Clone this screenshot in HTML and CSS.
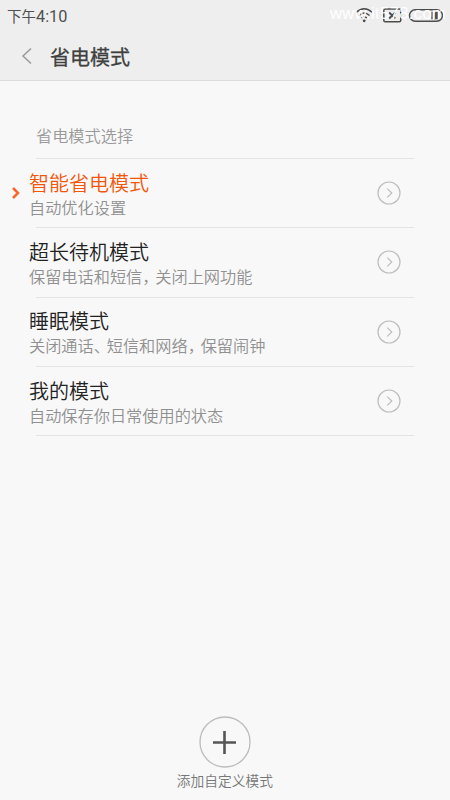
FILE: index.html
```html
<!DOCTYPE html>
<html lang="zh-CN">
<head>
<meta charset="utf-8">
<title>省电模式</title>
<link rel="stylesheet" href="styles.css">
</head>
<body>
<div class="screen">
  <header class="top">
    <div class="status">
      <span class="time">下午<span class="digits">4:10</span></span>
      <svg class="status-icons" width="92" height="20" viewBox="0 0 92 20" fill="none" stroke="#4c4c4c">
        <path d="M2 6.5Q10.2 -1 18.5 6.5M5 9.5Q10.2 4.5 15.5 9.5M7.5 12Q10.2 10 13 12" stroke-width="1.5"/>
        <circle cx="10.2" cy="14.8" r="1.4" fill="#4c4c4c" stroke="none"/>
        <rect x="29.8" y="3" width="17" height="12.8" rx="1.5" stroke-width="1.5"/>
        <path d="M35.2 6.5L41.2 12.5M41.2 6.5L35.2 12.5" stroke-width="1.8"/>
        <rect x="55.5" y="3.8" width="33" height="11.4" rx="5.7" stroke-width="1.5"/>
        <path d="M78 5.8V13.3" stroke-width="1.3"/>
        <path d="M82 5.8V13.3" stroke-width="3.5"/>
      </svg>
      <span class="watermark">www.it578.com</span>
    </div>
    <div class="bar">
      <svg class="back" width="12" height="18" viewBox="0 0 12 18"><path d="M10 1.5L2 9L10 16.5"/></svg>
      <h1>省电模式</h1>
    </div>
  </header>
  <main>
    <h2>省电模式选择</h2>
    <ul class="modes">
      <li class="mode selected">
        <svg class="marker" width="10" height="14" viewBox="0 0 10 14"><path d="M2 2L7 7L2 12"/></svg>
        <div class="label"><b>智能省电模式</b><p>自动优化设置</p></div>
        <svg class="go" width="24" height="24" viewBox="0 0 24 24"><circle cx="12" cy="12" r="11"/><path d="M10.3 7.6L14.8 12L10.3 16.4"/></svg>
      </li>
      <li class="mode">
        <div class="label"><b>超长待机模式</b><p>保留电话和短信<span class="mark">，</span>关闭上网功能</p></div>
        <svg class="go" width="24" height="24" viewBox="0 0 24 24"><circle cx="12" cy="12" r="11"/><path d="M10.3 7.6L14.8 12L10.3 16.4"/></svg>
      </li>
      <li class="mode">
        <div class="label"><b>睡眠模式</b><p>关闭通话<span class="mark">、</span>短信和网络<span class="mark">，</span>保留闹钟</p></div>
        <svg class="go" width="24" height="24" viewBox="0 0 24 24"><circle cx="12" cy="12" r="11"/><path d="M10.3 7.6L14.8 12L10.3 16.4"/></svg>
      </li>
      <li class="mode">
        <div class="label"><b>我的模式</b><p>自动保存你日常使用的状态</p></div>
        <svg class="go" width="24" height="24" viewBox="0 0 24 24"><circle cx="12" cy="12" r="11"/><path d="M10.3 7.6L14.8 12L10.3 16.4"/></svg>
      </li>
    </ul>
  </main>
  <footer>
    <svg width="52" height="52" viewBox="0 0 52 52" fill="none"><circle cx="26" cy="26" r="25" stroke="#bcbcbc" stroke-width="1.3"/><path d="M14 26.5H37M25.5 15V38" stroke="#555" stroke-width="2.6"/></svg>
    <span>添加自定义模式</span>
  </footer>
</div>
</body>
</html>
```
FILE: styles.css
```css
* { box-sizing: border-box; margin: 0; padding: 0; }
body {
  background: #f8f8f8;
  font-family: "Noto Sans CJK SC", sans-serif;
}
.screen {
  width: 450px;
  height: 800px;
  display: flex;
  flex-direction: column;
  overflow: hidden;
}
.top {
  height: 81px;
  background: #eeeeee;
  border-bottom: 1px solid #dcdcdc;
}
.status {
  position: relative;
  height: 32px;
  padding: 0 4px 0 7px;
  display: flex;
  justify-content: space-between;
  align-items: center;
}
.time { font-size: 14.5px; line-height: 20px; color: #505050; }
.digits { font-family: Roboto, sans-serif; font-size: 16.3px; }
.watermark {
  position: absolute;
  left: 330px;
  top: 3px;
  font: 16.5px/20px "Liberation Sans", sans-serif;
  letter-spacing: 0.4px;
  color: #fff;
}
.bar { height: 48px; padding-left: 21px; display: flex; align-items: center; }
.back { fill: none; stroke: #999; stroke-width: 1.5; }
h1 {
  margin: 2px 0 0 17px;
  font-size: 20px;
  line-height: 28px;
  font-weight: 400;
  color: #404040;
  -webkit-text-stroke: 0.3px #404040;
}
main { padding: 0 36px; }
h2 {
  height: 78px;
  padding-top: 42px;
  font-size: 16.2px;
  line-height: 24px;
  font-weight: 350;
  color: #999;
  border-bottom: 1px solid #e3e3e3;
}
.modes { list-style: none; }
.mode {
  position: relative;
  height: 69.33px;
  padding-right: 13px;
  display: flex;
  align-items: center;
  justify-content: space-between;
  border-bottom: 1px solid #e3e3e3;
}
.label { margin: 2px 0 0 -7px; }
.label b {
  display: block;
  font-size: 20px;
  line-height: 26px;
  font-weight: 350;
  color: #222;
}
.label p { font-size: 16.2px; line-height: 23px; font-weight: 350; color: #909090; white-space: nowrap; }
.mark { letter-spacing: -3.2px; }
.label .mark { margin-right: 0; }
.selected .label b { color: #f2560b; }
.marker {
  position: absolute;
  left: -25px;
  top: 27px;
  fill: none;
  stroke: #f9662b;
  stroke-width: 2.5;
}
.go { fill: none; stroke: #bdbdbd; stroke-width: 1.2; }
footer {
  margin-top: auto;
  height: 84px;
  display: flex;
  flex-direction: column;
  align-items: center;
}
footer span { margin-top: 1px; font-size: 13.75px; line-height: 22px; font-weight: 350; color: #777; }
```
